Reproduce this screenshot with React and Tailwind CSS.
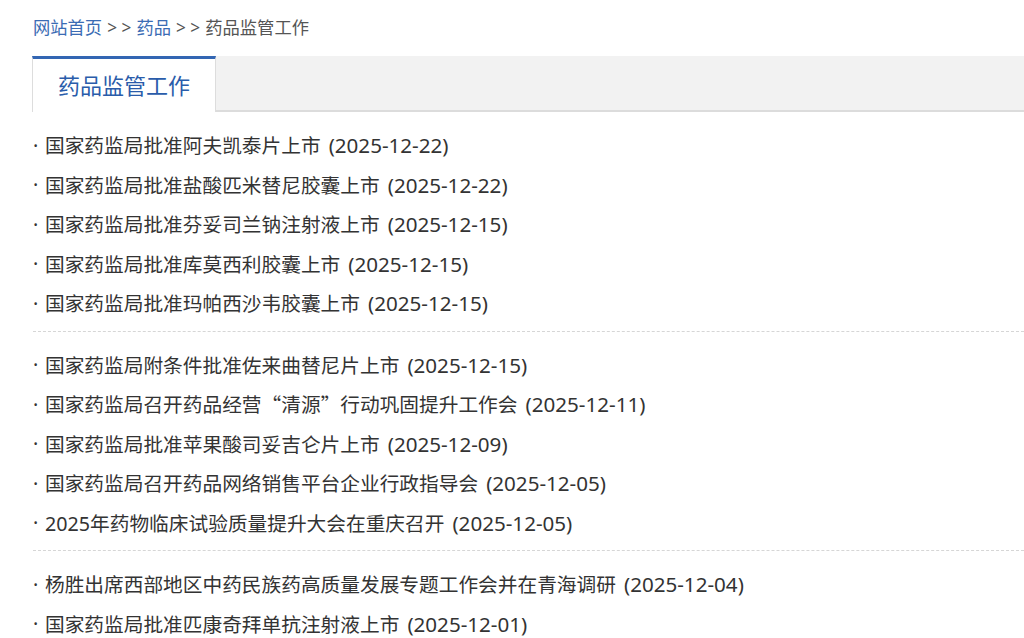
import React from 'react';

const groups = [
    [
        ['国家药监局批准阿夫凯泰片上市', '2025-12-22'],
        ['国家药监局批准盐酸匹米替尼胶囊上市', '2025-12-22'],
        ['国家药监局批准芬妥司兰钠注射液上市', '2025-12-15'],
        ['国家药监局批准库莫西利胶囊上市', '2025-12-15'],
        ['国家药监局批准玛帕西沙韦胶囊上市', '2025-12-15'],
    ],
    [
        ['国家药监局附条件批准佐来曲替尼片上市', '2025-12-15'],
        ['国家药监局召开药品经营“清源”行动巩固提升工作会', '2025-12-11'],
        ['国家药监局批准苹果酸司妥吉仑片上市', '2025-12-09'],
        ['国家药监局召开药品网络销售平台企业行政指导会', '2025-12-05'],
        ['2025年药物临床试验质量提升大会在重庆召开', '2025-12-05'],
    ],
    [
        ['杨胜出席西部地区中药民族药高质量发展专题工作会并在青海调研', '2025-12-04'],
        ['国家药监局批准匹康奇拜单抗注射液上市', '2025-12-01'],
    ],
];

// full-width quotes come from the CJK font
const renderTitle = (title) =>
    title.split(/([“”])/).map((part, i) =>
        part === '“' || part === '”'
            ? <span key={i} className="font-['Noto_Sans_CJK_SC',sans-serif]">{part}</span>
            : part
    );

const App = () => {
    return (
        <div className="min-h-screen bg-white overflow-hidden font-['Noto_Sans','Noto_Sans_CJK_SC',sans-serif] text-[#333]">
            {/* Breadcrumb */}
            <div className="pl-[33px] pt-[16px] text-[17.3px] leading-[24px] text-[#555] whitespace-nowrap">
                <a className="text-[#3b6cb4]">网站首页</a>
                <span className="mx-[5px]">&gt; &gt;</span>
                <a className="text-[#3b6cb4]">药品</a>
                <span className="mx-[5px]">&gt; &gt;</span>
                <span>药品监管工作</span>
            </div>

            {/* Tab header */}
            <div className="mt-[16px] ml-[32px] flex h-[56px] bg-[#f2f2f2] border-b-2 border-[#dcdcdc]">
                <div className="w-[184px] h-[56px] bg-white border-t-[3px] border-t-[#3366b3] border-l border-r border-[#ddd] flex items-center justify-center text-[22px] text-[#2a5caa]">
                    药品监管工作
                </div>
            </div>

            {/* News list */}
            <div className="ml-[33px]">
                {groups.map((items, gi) => (
                    <ul
                        key={gi}
                        className={`pt-[14px] pb-[7px] ${gi < groups.length - 1 ? 'border-b border-dashed border-[#d6d6d6]' : ''}`}
                    >
                        {items.map(([title, date]) => (
                            <li key={title} className="h-[39.5px] flex items-center whitespace-nowrap text-[19.7px]">
                                <span className="w-[12px]">·</span>
                                <a>
                                    {renderTitle(title)}
                                    <span className="ml-[8px] text-[20.6px]">({date})</span>
                                </a>
                            </li>
                        ))}
                    </ul>
                ))}
            </div>
        </div>
    );
};

export default App;
